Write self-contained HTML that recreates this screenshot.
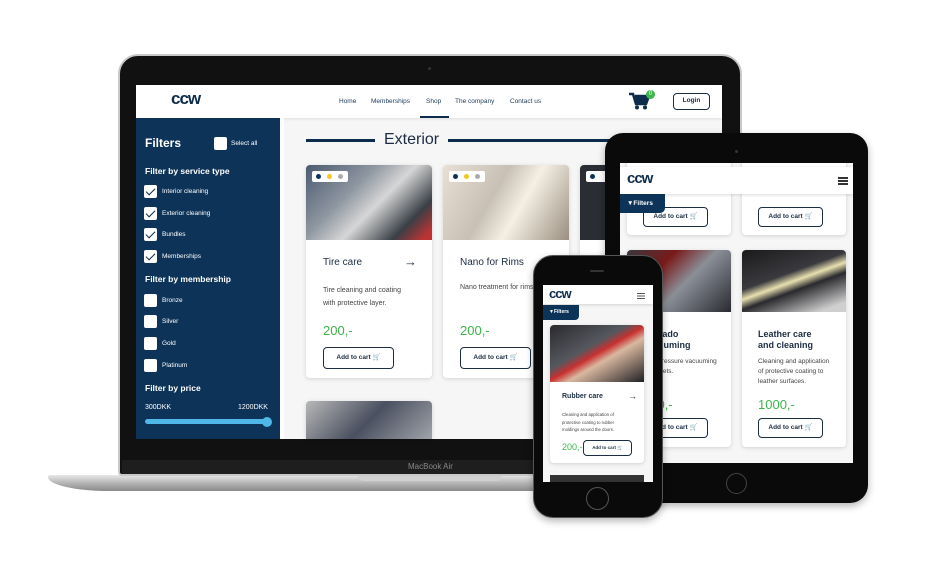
<!DOCTYPE html>
<html><head><meta charset="utf-8"><style>
*{box-sizing:border-box;margin:0;padding:0}
body{width:930px;height:566px;background:#fff;position:relative;overflow:hidden;font-family:"Liberation Sans",sans-serif}
.a{position:absolute}
.nav{font-size:6.5px;color:#1c3a5a}
.cb{position:absolute;width:13px;height:13px;background:#fff;border-radius:2px}
.cb.c::after{content:"";position:absolute;left:4px;top:1px;width:4px;height:8px;border:solid #0d2b4a;border-width:0 1.5px 1.5px 0;transform:rotate(45deg)}
.sl{position:absolute;left:162px;font-size:6.5px;color:#fff}
.sh{position:absolute;left:145px;font-size:8.5px;color:#fff;font-weight:bold}
.card{position:absolute;background:#fff;border-radius:4px;box-shadow:0 1px 4px rgba(0,0,0,.15);overflow:hidden}
.btn{position:absolute;border:1.5px solid #1b2d42;border-radius:4px;background:#fff;font-size:6.5px;color:#1b2d42;text-align:center;font-weight:bold}
.img1{background:linear-gradient(135deg,#4a5a70 0%,#8e96a0 35%,#d6d6d6 55%,#3a3f46 80%,#b33 95%)}
.img2{background:linear-gradient(120deg,#e8e0d4 0%,#c8c0b4 40%,#f5efe4 60%,#9a8f80 100%)}
.dots{position:absolute;left:6px;top:6px;width:36px;height:11px;background:#fff;border-radius:2px}
.dots i{position:absolute;top:3px;width:5px;height:5px;border-radius:50%}
.price{position:absolute;color:#3cb54a;font-size:13px}
.dk{background:#0d3358}
</style></head><body>

<!-- laptop base -->
<div class="a" style="left:48px;top:475px;width:800px;height:16px;background:linear-gradient(#e8e8e8,#b5b5b5 50%,#8a8a8a);border-radius:2px 2px 60px 60px/2px 2px 14px 14px"></div>
<div class="a" style="left:358px;top:475px;width:144px;height:6px;background:#d0d0d0;border-radius:0 0 6px 6px"></div>
<!-- laptop lid -->
<div class="a" style="left:118px;top:54px;width:624px;height:422px;background:#111;border-radius:20px 20px 4px 4px;border:2px solid #c8c8c8"></div>
<div class="a" style="left:122px;top:460px;width:616px;height:14px;background:#1e1e1e;"></div>
<div class="a" style="left:408px;top:462px;font-size:8px;color:#888">MacBook Air</div>
<div class="a" style="left:428px;top:67px;width:3px;height:3px;background:#333;border-radius:50%"></div>

<!-- laptop screen -->
<div class="a" style="left:136px;top:85px;width:586px;height:354px;background:#f6f6f6;overflow:hidden">
</div>
<div class="a" style="left:136px;top:85px;width:586px;height:33px;background:#fff;box-shadow:0 1px 3px rgba(0,0,0,.1)"></div>
<div class="a" style="left:171px;top:89px;font-size:17px;font-weight:bold;color:#0d2b4a;letter-spacing:-1px">ccw</div>
<div class="a nav" style="left:339px;top:98px">Home</div>
<div class="a nav" style="left:371px;top:98px">Memberships</div>
<div class="a nav" style="left:426px;top:98px">Shop</div>
<div class="a nav" style="left:455px;top:98px">The company</div>
<div class="a nav" style="left:510px;top:98px">Contact us</div>
<div class="a" style="left:420px;top:116px;width:29px;height:2px;background:#0d2b4a"></div>
<svg class="a" style="left:629px;top:92px" width="22" height="18" viewBox="0 0 22 18"><path d="M0 2h4l3 10h10l3-8H6" fill="none" stroke="#0d2b4a" stroke-width="2.5"/><path d="M6 4h14l-3 8H7z" fill="#0d2b4a"/><circle cx="8" cy="15.5" r="2" fill="#0d2b4a"/><circle cx="16" cy="15.5" r="2" fill="#0d2b4a"/></svg>
<div class="a" style="left:646px;top:90px;width:9px;height:9px;border-radius:50%;background:#3cb54a;color:#fff;font-size:6px;text-align:center;line-height:9px">0</div>
<div class="btn" style="left:673px;top:93px;width:37px;height:17px;line-height:14px;font-size:6.5px">Login</div>

<!-- sidebar -->
<div class="a dk" style="left:136px;top:118px;width:144px;height:321px"></div>
<div class="a" style="left:280px;top:118px;width:4px;height:321px;background:#fff"></div>
<div class="a" style="left:145px;top:136px;font-size:12px;color:#fff;font-weight:bold">Filters</div>
<div class="cb" style="left:214px;top:137px"></div>
<div class="sl" style="left:231px;top:140px">Select all</div>
<div class="sh" style="top:166px">Filter by service type</div>
<div class="cb c" style="left:144px;top:185px"></div><div class="sl" style="top:188px">Interior cleaning</div>
<div class="cb c" style="left:144px;top:207px"></div><div class="sl" style="top:210px">Exterior cleaning</div>
<div class="cb c" style="left:144px;top:228px"></div><div class="sl" style="top:231px">Bundles</div>
<div class="cb c" style="left:144px;top:250px"></div><div class="sl" style="top:253px">Memberships</div>
<div class="sh" style="top:274px">Filter by membership</div>
<div class="cb" style="left:144px;top:294px"></div><div class="sl" style="top:297px">Bronze</div>
<div class="cb" style="left:144px;top:315px"></div><div class="sl" style="top:318px">Silver</div>
<div class="cb" style="left:144px;top:337px"></div><div class="sl" style="top:340px">Gold</div>
<div class="cb" style="left:144px;top:359px"></div><div class="sl" style="top:362px">Platinum</div>
<div class="sh" style="top:383px">Filter by price</div>
<div class="sl" style="left:145px;top:404px;font-size:7px">300DKK</div>
<div class="sl" style="left:238px;top:404px;font-size:7px">1200DKK</div>
<div class="a" style="left:145px;top:419px;width:124px;height:5px;border-radius:3px;background:#4fb8e8"></div>
<div class="a" style="left:262px;top:417px;width:10px;height:10px;border-radius:50%;background:#4fb8e8"></div>

<!-- main -->
<div class="a" style="left:306px;top:139px;width:69px;height:3px;background:#0d2b4a"></div>
<div class="a" style="left:384px;top:131px;font-size:16px;color:#1b2d42">Exterior</div>
<div class="a" style="left:448px;top:139px;width:170px;height:3px;background:#0d2b4a"></div>

<div class="card" style="left:306px;top:165px;width:126px;height:213px">
 <div class="a img1" style="left:0;top:0;width:126px;height:75px"></div>
 <div class="dots"><i style="left:4px;background:#0d3358"></i><i style="left:15px;background:#f3c623"></i><i style="left:26px;background:#aaa"></i></div>
 <div class="a" style="left:17px;top:92px;font-size:10px;color:#1b2d42">Tire care</div>
 <div class="a" style="left:98px;top:89px;font-size:13px;color:#1b2d42;font-weight:bold">→</div>
 <div class="a" style="left:17px;top:119px;font-size:7px;color:#444;line-height:13px">Tire cleaning and coating<br>with protective layer.</div>
 <div class="price" style="left:17px;top:158px">200,-</div>
 <div class="btn" style="left:17px;top:182px;width:71px;height:22px;line-height:19px">Add to cart 🛒</div>
</div>
<div class="card" style="left:443px;top:165px;width:126px;height:213px">
 <div class="a img2" style="left:0;top:0;width:126px;height:75px"></div>
 <div class="dots"><i style="left:4px;background:#0d3358"></i><i style="left:15px;background:#f3c623"></i><i style="left:26px;background:#aaa"></i></div>
 <div class="a" style="left:17px;top:92px;font-size:10px;color:#1b2d42">Nano for Rims</div>
 <div class="a" style="left:17px;top:119px;font-size:7px;color:#444;white-space:nowrap">Nano treatment for rims</div>
 <div class="price" style="left:17px;top:158px">200,-</div>
 <div class="btn" style="left:17px;top:182px;width:71px;height:22px;line-height:19px">Add to cart 🛒</div>
</div>
<div class="card" style="left:580px;top:165px;width:126px;height:213px">
 <div class="a" style="left:0;top:0;width:126px;height:75px;background:#2a2d33"></div>
 <div class="dots"><i style="left:4px;background:#0d3358"></i></div>
</div>
<div class="card" style="left:306px;top:401px;width:126px;height:38px;border-radius:4px 4px 0 0">
 <div class="a" style="left:0;top:0;width:126px;height:38px;background:linear-gradient(135deg,#b8b8b8,#4a5060 50%,#a0a4aa)"></div>
</div>

<!-- tablet -->
<div class="a" style="left:605px;top:133px;width:263px;height:370px;background:#0a0a0a;border-radius:18px;box-shadow:0 3px 8px rgba(0,0,0,.3)"></div>
<div class="a" style="left:735px;top:150px;width:3px;height:3px;background:#333;border-radius:50%"></div>
<div class="a" style="left:726px;top:473px;width:21px;height:21px;border-radius:50%;border:1.5px solid #444"></div>
<div class="a" style="left:620px;top:163px;width:233px;height:300px;background:#f6f6f6;overflow:hidden">
 <div class="card" style="left:7px;top:-10px;width:104px;height:82px"></div>
 <div class="card" style="left:122px;top:-10px;width:104px;height:82px"></div>
 <div class="btn" style="left:23px;top:44px;width:65px;height:20px;line-height:17px">Add to cart 🛒</div>
 <div class="btn" style="left:138px;top:44px;width:65px;height:20px;line-height:17px">Add to cart 🛒</div>
 <div class="card" style="left:7px;top:87px;width:104px;height:197px">
  <div class="a" style="left:0;top:0;width:104px;height:62px;background:linear-gradient(135deg,#3a3a40,#7a1a1a 30%,#8a8f98 55%,#2a2a30)"></div>
  <div class="a" style="left:16px;top:79px;font-size:9px;color:#1b2d42;font-weight:bold;line-height:11px">Tornado<br>vacuuming</div>
  <div class="a" style="left:16px;top:107px;font-size:6.5px;color:#444;line-height:10px">High pressure vacuuming<br>of carpets.</div>
  <div class="price" style="left:16px;top:147px">500,-</div>
  <div class="btn" style="left:16px;top:168px;width:65px;height:20px;line-height:17px">Add to cart 🛒</div>
 </div>
 <div class="card" style="left:122px;top:87px;width:104px;height:197px">
  <div class="a" style="left:0;top:0;width:104px;height:62px;background:linear-gradient(160deg,#1a1a1c,#3a3a3e 40%,#e8e0b0 50%,#2a2a2e 60%,#cfcfcf 90%)"></div>
  <div class="a" style="left:16px;top:79px;font-size:9px;color:#1b2d42;font-weight:bold;line-height:11px">Leather care<br>and cleaning</div>
  <div class="a" style="left:16px;top:194px"></div>
  <div class="a" style="left:16px;top:194px"></div>
  <div class="a" style="left:16px;top:107px;font-size:6.5px;color:#444;line-height:10px">Cleaning and application<br>of protective coating to<br>leather surfaces.</div>
  <div class="price" style="left:16px;top:147px">1000,-</div>
  <div class="btn" style="left:16px;top:168px;width:65px;height:20px;line-height:17px">Add to cart 🛒</div>
 </div>
 <div class="a" style="left:0;top:4px;width:233px;height:27px;background:#fff;box-shadow:0 1px 3px rgba(0,0,0,.15)"></div>
 <div class="a" style="left:7px;top:7px;font-size:15px;font-weight:bold;color:#0d2b4a;letter-spacing:-1px">ccw</div>
 <div class="a" style="left:218px;top:14px;width:10px;height:1.5px;background:#333;box-shadow:0 3px 0 #333,0 6px 0 #333"></div>
 <div class="a dk" style="left:0;top:31px;width:45px;height:19px;border-radius:0 0 5px 0;color:#fff;font-size:6.5px;font-weight:bold;line-height:19px;padding-left:7px">▼Filters</div>
</div>

<!-- phone -->
<div class="a" style="left:533px;top:255px;width:130px;height:263px;background:#0a0a0a;border-radius:20px;border:1.5px solid #555;box-shadow:0 3px 8px rgba(0,0,0,.3)"></div>
<div class="a" style="left:590px;top:270px;width:14px;height:2px;background:#333;border-radius:1px"></div>
<div class="a" style="left:586px;top:487px;width:23px;height:23px;border-radius:50%;border:1.5px solid #555"></div>
<div class="a" style="left:543px;top:285px;width:110px;height:197px;background:#f6f6f6;overflow:hidden">
 <div class="a" style="left:0;top:0;width:110px;height:19px;background:#fff;box-shadow:0 1px 3px rgba(0,0,0,.15)"></div>
 <div class="a" style="left:6px;top:1px;font-size:13px;font-weight:bold;color:#0d2b4a;letter-spacing:-1px">ccw</div>
 <div class="a" style="left:94px;top:8px;width:8px;height:1.2px;background:#555;box-shadow:0 2.5px 0 #555,0 5px 0 #555"></div>
 <div class="a dk" style="left:0;top:20px;width:36px;height:15px;border-radius:0 0 4px 0;color:#fff;font-size:5px;font-weight:bold;line-height:15px;padding-left:6px">▼Filters</div>
 <div class="card" style="left:7px;top:40px;width:94px;height:138px">
  <div class="a" style="left:0;top:0;width:94px;height:57px;background:linear-gradient(150deg,#2a2a2e,#55585e 40%,#c83030 50%,#d9b8a0 60%,#202024)"></div>
  <div class="a" style="left:12px;top:68px;font-size:7px;color:#1b2d42;font-weight:bold">Rubber care</div>
  <div class="a" style="left:78px;top:66px;font-size:9px;color:#1b2d42;font-weight:bold">→</div>
  <div class="a" style="left:12px;top:86px;font-size:4.3px;color:#444;line-height:7.5px">Cleaning and application of<br>protective coating to rubber<br>moldings around the doors.</div>
  <div class="price" style="left:12px;top:117px;font-size:9px">200,-</div>
  <div class="btn" style="left:33px;top:115px;width:49px;height:16px;line-height:13px;font-size:4.5px">Add to cart 🛒</div>
 </div>
 <div class="a" style="left:7px;top:190px;width:94px;height:10px;background:#333"></div>
</div>
</body></html>
